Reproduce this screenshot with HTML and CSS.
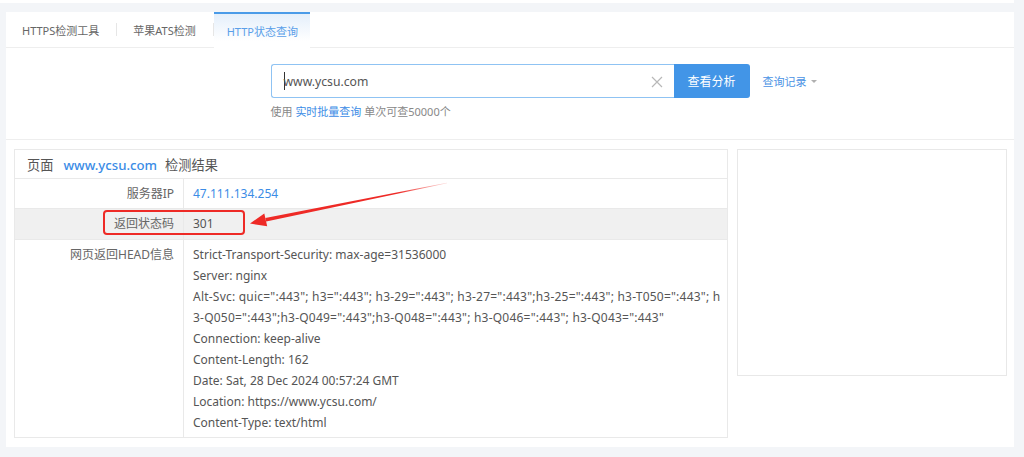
FILE: index.html
```html
<!DOCTYPE html>
<html lang="zh-CN">
    <head>
        <meta charset="UTF-8" />
        <meta name="viewport" content="width=device-width, initial-scale=1.0" />
        <title>HTTP状态查询</title>
        <link rel="stylesheet" href="styles.css">
    </head>
    <body>
        <div class="topbar"></div>
        <div class="card">
            <div class="tabs">
                <a class="tab">HTTPS检测工具</a>
                <span class="tab-sep"></span>
                <a class="tab">苹果ATS检测</a>
                <span class="tab-sep"></span>
                <a class="tab active">HTTP状态查询</a>
            </div>

            <div class="search">
                <div class="search-main">
                    <div class="search-row">
                        <div class="search-input">
                            <span class="caret"></span>www.ycsu.com
                            <svg class="clear" width="12" height="12" viewBox="0 0 12 12">
                                <path d="M1 1L11 11M11 1L1 11" stroke="#b8b8b8" stroke-width="1.2" fill="none" />
                            </svg>
                        </div>
                        <button class="search-btn">查看分析</button>
                    </div>
                    <div class="hint">使用 <a class="link">实时批量查询</a> 单次可查50000个</div>
                </div>
                <div class="history">查询记录<span class="arrow-down"></span></div>
            </div>

            <div class="results">
                <table class="result-table">
                    <thead>
                        <tr>
                            <th colspan="2">
                                页面<span class="domain">www.ycsu.com</span>检测结果
                            </th>
                        </tr>
                    </thead>
                    <tbody>
                        <tr>
                            <td class="label">服务器IP</td>
                            <td class="value"><span class="ip">47.111.134.254</span></td>
                        </tr>
                        <tr class="highlight">
                            <td class="label">返回状态码</td>
                            <td class="value">301</td>
                        </tr>
                        <tr>
                            <td class="label">网页返回HEAD信息</td>
                            <td class="value head-info">
                                <div>Strict-Transport-Security: max-age=31536000</div>
                                <div>Server: nginx</div>
                                <div class="alt-svc">Alt-Svc: quic=":443"; h3=":443"; h3-29=":443"; h3-27=":443";h3-25=":443"; h3-T050=":443"; h3-Q050=":443";h3-Q049=":443";h3-Q048=":443"; h3-Q046=":443"; h3-Q043=":443"</div>
                                <div>Connection: keep-alive</div>
                                <div>Content-Length: 162</div>
                                <div>Date: Sat, 28 Dec 2024 00:57:24 GMT</div>
                                <div>Location: https://www.ycsu.com/</div>
                                <div>Content-Type: text/html</div>
                            </td>
                        </tr>
                    </tbody>
                </table>
                <div class="side-box"></div>
            </div>
        </div>

        <!-- red annotation drawn over the screenshot -->
        <svg class="annotation" width="1024" height="457" viewBox="0 0 1024 457">
            <defs>
                <linearGradient id="fade" x1="250" y1="223" x2="447" y2="183" gradientUnits="userSpaceOnUse">
                    <stop offset="0" stop-color="#ee2a26" />
                    <stop offset="0.75" stop-color="#ee2a26" />
                    <stop offset="1" stop-color="#ee2a26" stop-opacity="0.15" />
                </linearGradient>
            </defs>
            <rect x="104" y="211" width="140" height="23" rx="3" fill="none" stroke="#ee2a26" stroke-width="2" />
            <polygon points="265.3,218.1 266.2,221.4 447.1,183.3 446.9,182.7" fill="url(#fade)" />
            <polygon points="250,223.5 264.3,213.6 267.2,226.2" fill="#ee2a26" />
        </svg>
    </body>
</html>
```

FILE: styles.css
```css
body {
    margin: 0;
    padding: 0;
    background-color: #f3f5f8;
    font-family: "Noto Sans", "Noto Sans CJK SC", sans-serif;
    font-size: 12px;
    color: #555;
    height: 457px;
    overflow: hidden;
    position: relative;
}

.topbar {
    height: 3px;
    margin-right: 10px;
    background: #fff;
}

.card {
    margin: 9px 10px 0 6px;
    background: #fff;
}

.tabs {
    display: flex;
    align-items: center;
    height: 35px;
    border-bottom: 1px solid #eeeeee;
}

.tab {
    display: flex;
    align-items: center;
    height: 100%;
    padding: 0 17px 0 16px;
    font-size: 11px;
    color: #666;
    cursor: pointer;
}

.tab-sep {
    width: 1px;
    height: 13px;
    background: #e6e6e6;
}

.tab.active {
    box-sizing: border-box;
    height: 36px;
    margin-bottom: -1px;
    padding: 0 12px 0 13px;
    border-top: 2px solid #4a9be8;
    background: linear-gradient(#e4effb, #fff 80%);
    color: #5a9fe9;
}

.search {
    display: grid;
    grid-template-columns: 1fr 479px 1fr;
    padding: 16px 0 19px;
    border-bottom: 1px solid #eeeeee;
}

.search-main {
    grid-column: 2;
}

.search-row {
    display: flex;
    height: 34px;
}

.search-input {
    position: relative;
    flex: 1;
    display: flex;
    align-items: center;
    box-sizing: border-box;
    padding-left: 12px;
    border: 1px solid #8fc3f3;
    border-right: none;
    border-radius: 3px 0 0 3px;
    font-size: 12.2px;
    color: #555;
}

.caret {
    display: inline-block;
    width: 1px;
    height: 18px;
    margin-right: -1px;
    background: #333;
}

.clear {
    position: absolute;
    right: 11px;
    top: 11px;
}

.search-btn {
    width: 76px;
    border: none;
    border-radius: 0 3px 3px 0;
    background: #4295e7;
    color: #fff;
    font-family: inherit;
    font-size: 12px;
    cursor: pointer;
}

.hint {
    margin-top: 6px;
    font-size: 11px;
    line-height: 16px;
    color: #888;
}

.link {
    color: #3b8ce6;
}

.history {
    grid-column: 3;
    display: flex;
    align-items: center;
    height: 34px;
    margin-left: 13px;
    font-size: 11px;
    color: #4a92e4;
}

.arrow-down {
    width: 0;
    height: 0;
    margin-left: 4px;
    border-left: 3px solid transparent;
    border-right: 3px solid transparent;
    border-top: 3px solid #b0b0b0;
}

.results {
    display: flex;
    align-items: flex-start;
    gap: 9px;
    padding: 9px 7px 9px 8px;
}

.result-table {
    width: 714px;
    border-collapse: collapse;
    border: 1px solid #e9e9e9;
}

.result-table th {
    height: 28px;
    padding: 0 12px;
    text-align: left;
    font-size: 13.2px;
    font-weight: normal;
    color: #555;
    border-bottom: 1px solid #e9e9e9;
}

.domain {
    margin: 0 8px 0 10px;
    color: #3b8ce6;
    font-weight: 500;
}

.result-table td {
    border-bottom: 1px solid #e9e9e9;
    vertical-align: top;
}

.label {
    box-sizing: border-box;
    width: 169px;
    padding: 7px 9px 6px 0;
    text-align: right;
    line-height: 16px;
    color: #666;
    border-right: 1px solid #e9e9e9;
}

.value {
    padding: 7px 4px 6px 9px;
    line-height: 16px;
    color: #555;
}

.highlight td {
    background: #f0f0f0;
    padding-top: 7px;
    padding-bottom: 7px;
}

.ip {
    color: #3b8ce6;
}

.head-info {
    padding-top: 4px;
    padding-bottom: 4px;
    line-height: 21px;
    word-break: break-all;
}

.alt-svc {
    letter-spacing: 0.22px;
}

.side-box {
    box-sizing: border-box;
    width: 270px;
    height: 227px;
    border: 1px solid #e8e8e8;
}

.annotation {
    position: absolute;
    top: 0;
    left: 0;
    pointer-events: none;
}
```
